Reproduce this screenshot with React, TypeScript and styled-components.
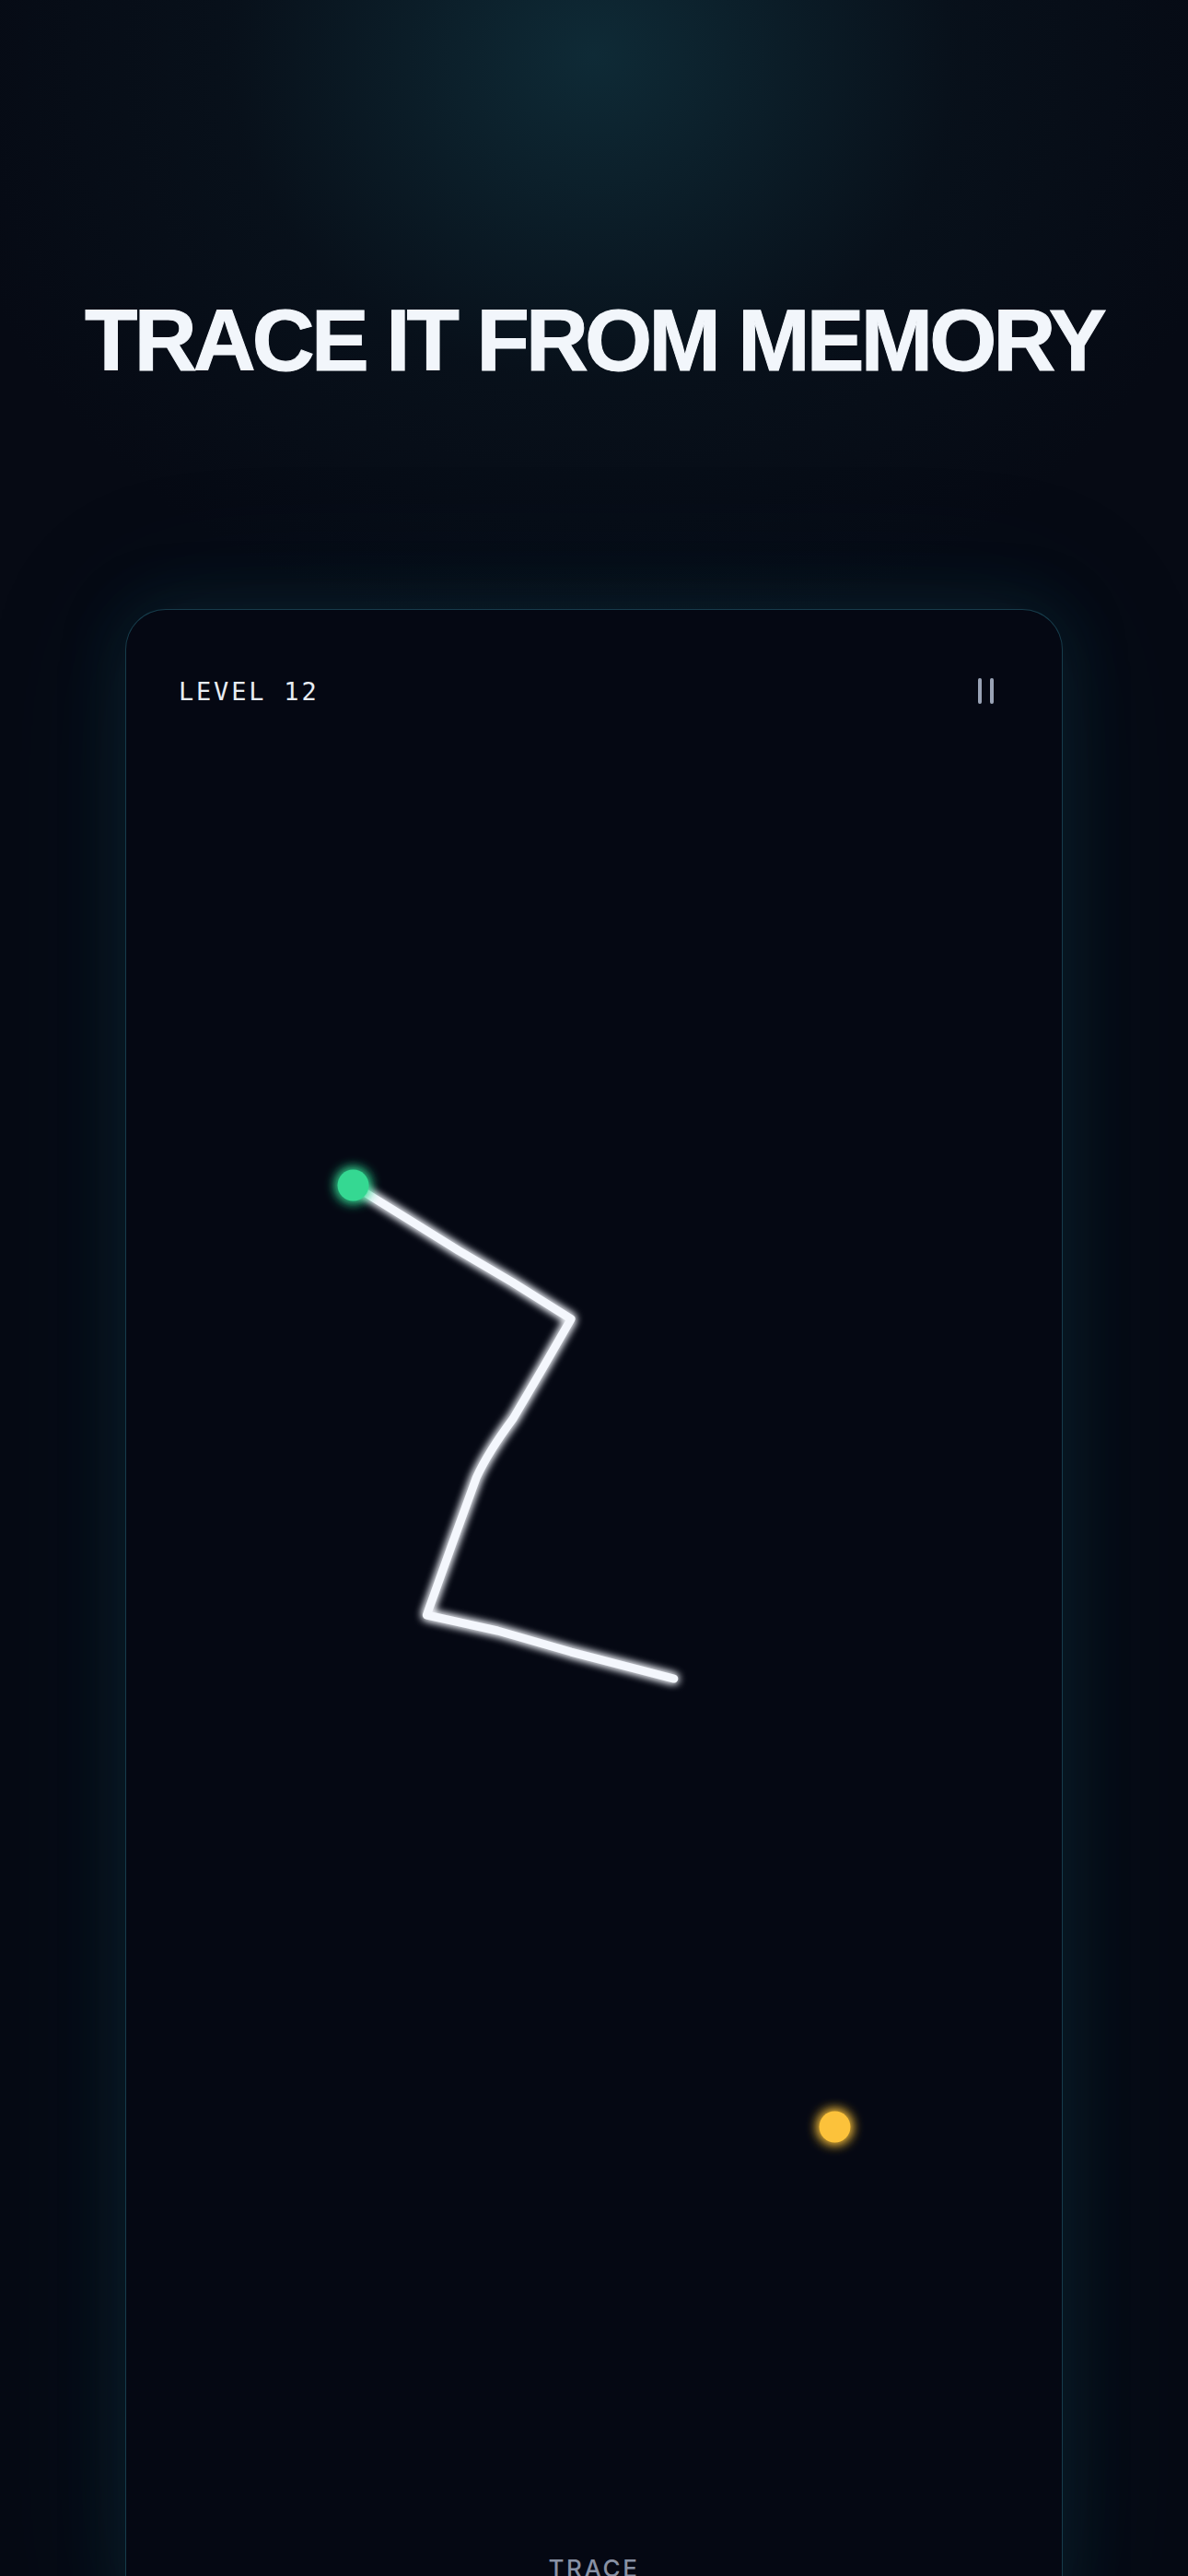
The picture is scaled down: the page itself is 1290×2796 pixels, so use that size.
import styled, { createGlobalStyle } from 'styled-components';

const GlobalStyle = createGlobalStyle`
  html, body {
    margin: 0;
    padding: 0;
    background: #060a14;
  }
  #root {
    height: 2796px;
    overflow: hidden;
  }
`;

export default function App() {
  return (
    <>
      <GlobalStyle />
      <StyledPage>
        <StyledTitle>TRACE IT FROM MEMORY</StyledTitle>
        <StyledCard>
          <StyledHeader>
            <StyledLevel>LEVEL 12</StyledLevel>
            <StyledPause aria-label="Pause">
              <StyledPauseBar />
              <StyledPauseBar />
            </StyledPause>
          </StyledHeader>
          <StyledCanvas>
            <TracePath />
          </StyledCanvas>
          <StyledFooter>
            <StyledHint>TRACE</StyledHint>
          </StyledFooter>
        </StyledCard>
      </StyledPage>
    </>
  );
}

function TracePath() {
  // viewBox uses page coordinates so points read straight off the reference
  return (
    <svg
      width="100%"
      height="100%"
      viewBox="136 771 1018 1990"
      preserveAspectRatio="none"
    >
      <defs>
        <filter id="lineGlow" x="-20%" y="-20%" width="140%" height="140%">
          <feGaussianBlur in="SourceGraphic" stdDeviation="5" result="blur" />
          <feMerge>
            <feMergeNode in="blur" />
            <feMergeNode in="blur" />
            <feMergeNode in="SourceGraphic" />
          </feMerge>
        </filter>
        <filter id="dotGlow" x="-150%" y="-150%" width="400%" height="400%">
          <feGaussianBlur in="SourceGraphic" stdDeviation="7" result="blur" />
          <feMerge>
            <feMergeNode in="blur" />
            <feMergeNode in="blur" />
            <feMergeNode in="SourceGraphic" />
          </feMerge>
        </filter>
      </defs>
      <path
        d="M383 1287 L440 1322 L498 1358 L556 1392 L620 1432 L590 1484 L557 1540 Q530 1576 517 1604 L490 1678 L463 1753 L540 1770 L620 1793 L732 1822"
        fill="none"
        stroke="#f4f7fd"
        strokeWidth="9"
        strokeLinecap="round"
        strokeLinejoin="round"
        filter="url(#lineGlow)"
      />
      <circle cx="383" cy="1287" r="17" fill="#34d892" filter="url(#dotGlow)" />
      <circle cx="907" cy="2308" r="17" fill="#fcc23a" filter="url(#dotGlow)" />
    </svg>
  );
}

const StyledPage = styled.div`
  height: 2796px;
  box-sizing: border-box;
  padding: 0 136px;
  display: flex;
  flex-direction: column;
  align-items: center;
  background:
    radial-gradient(ellipse 720px 640px at 645px 60px, rgba(16, 48, 60, 0.85), rgba(10, 24, 34, 0.45) 55%, rgba(6, 10, 20, 0) 100%),
    #060a14;
`;

const StyledTitle = styled.h1`
  margin: 323px 0 0;
  font-family: 'Liberation Sans', Arial, sans-serif;
  font-weight: 700;
  font-size: 94px;
  line-height: 1;
  letter-spacing: -3.8px;
  color: #f2f6fb;
  white-space: nowrap;
  text-align: center;
  -webkit-text-stroke: 1px #f2f6fb;
`;

const StyledCard = styled.div`
  margin-top: 244px;
  width: 1018px;
  height: 2200px;
  flex-shrink: 0;
  box-sizing: border-box;
  display: flex;
  flex-direction: column;
  background: #050813;
  border: 1px solid rgba(38, 104, 122, 0.55);
  border-radius: 44px;
  box-shadow:
    0 0 70px rgba(18, 78, 96, 0.28),
    0 0 160px rgba(14, 60, 76, 0.18);
`;

const StyledHeader = styled.div`
  display: flex;
  align-items: center;
  justify-content: space-between;
  height: 40px;
  padding: 68px 74px 0 57px;
`;

const StyledLevel = styled.span`
  font-family: 'DejaVu Sans Mono', 'Liberation Mono', monospace;
  font-size: 27px;
  letter-spacing: 2.8px;
  color: #e8edf4;
`;

const StyledPause = styled.div`
  display: flex;
  gap: 9px;
  height: 28px;
`;

const StyledPauseBar = styled.span`
  width: 4px;
  height: 28px;
  border-radius: 2px;
  background: #9aa3b6;
`;

const StyledCanvas = styled.div`
  height: 1992px;
  flex-shrink: 0;
`;

const StyledFooter = styled.div`
  display: flex;
  justify-content: center;
  padding-top: 10px;
`;

const StyledHint = styled.span`
  font-family: Inter, 'Noto Sans', sans-serif;
  font-size: 26px;
  font-weight: 500;
  letter-spacing: 2.6px;
  color: #8891a4;
`;
